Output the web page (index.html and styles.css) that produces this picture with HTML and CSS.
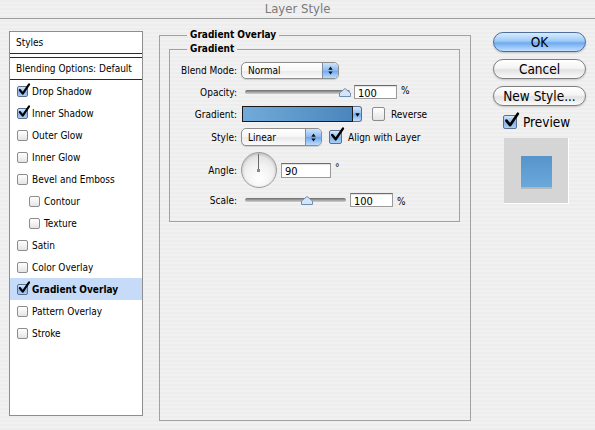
FILE: index.html
```html
<!DOCTYPE html>
<html lang="en">
<head>
    <meta charset="UTF-8">
    <title>Layer Style</title>
    <link rel="stylesheet" href="styles.css">
</head>
<body>
    <div class="window">
        <header class="titlebar">Layer Style</header>
        <div class="content">
            <ul class="styles-list">
                <li class="list-head">Styles</li>
                <li class="list-blend">Blending Options: Default</li>
                <li class="item"><span class="cb on"><svg viewBox="0 0 14 14"><path d="M3 7.5 L6.2 11.5 L13 1.5"/></svg></span>Drop Shadow</li>
                <li class="item"><span class="cb on"><svg viewBox="0 0 14 14"><path d="M3 7.5 L6.2 11.5 L13 1.5"/></svg></span>Inner Shadow</li>
                <li class="item"><span class="cb"></span>Outer Glow</li>
                <li class="item"><span class="cb"></span>Inner Glow</li>
                <li class="item"><span class="cb"></span>Bevel and Emboss</li>
                <li class="item sub"><span class="cb"></span>Contour</li>
                <li class="item sub"><span class="cb"></span>Texture</li>
                <li class="item"><span class="cb"></span>Satin</li>
                <li class="item"><span class="cb"></span>Color Overlay</li>
                <li class="item selected"><span class="cb on"><svg viewBox="0 0 14 14"><path d="M3 7.5 L6.2 11.5 L13 1.5"/></svg></span>Gradient Overlay</li>
                <li class="item"><span class="cb"></span>Pattern Overlay</li>
                <li class="item"><span class="cb"></span>Stroke</li>
            </ul>

            <fieldset class="group outer">
                <legend>Gradient Overlay</legend>
                <fieldset class="group inner">
                    <legend>Gradient</legend>

                    <div class="row">
                        <span class="label">Blend Mode:</span>
                        <div class="select blend"><span>Normal</span><span class="stepper"><svg viewBox="0 0 8 12"><path d="M4 1.5 L6.5 5 H1.5 Z M4 10.5 L6.5 7 H1.5 Z"/></svg></span></div>
                    </div>

                    <div class="row">
                        <span class="label">Opacity:</span>
                        <div class="slider opacity"><span class="track"></span><svg class="thumb" viewBox="0 0 12 9"><path d="M0.5 8.5 V5 L6 0.5 L11.5 5 V8.5 Z"/></svg></div>
                        <span class="field num">100</span>
                        <span class="unit">%</span>
                    </div>

                    <div class="row">
                        <span class="label">Gradient:</span>
                        <span class="gradient-swatch"></span>
                        <span class="gradient-arrow"><svg viewBox="0 0 8 8"><path d="M1.5 2.5 H6.5 L4 6.5 Z"/></svg></span>
                        <span class="cb mid reverse"></span>
                        <span class="check-text">Reverse</span>
                    </div>

                    <div class="row row-style">
                        <span class="label">Style:</span>
                        <div class="select style"><span>Linear</span><span class="stepper"><svg viewBox="0 0 8 12"><path d="M4 1.5 L6.5 5 H1.5 Z M4 10.5 L6.5 7 H1.5 Z"/></svg></span></div>
                        <span class="cb mid on align"><svg viewBox="0 0 14 14"><path d="M3 7.5 L6.2 11.5 L13 1.5"/></svg></span>
                        <span class="check-text">Align with Layer</span>
                    </div>

                    <div class="row row-angle">
                        <span class="label">Angle:</span>
                        <span class="dial"></span>
                        <span class="field angle">90</span>
                        <span class="unit deg">&deg;</span>
                    </div>

                    <div class="row row-scale">
                        <span class="label">Scale:</span>
                        <div class="slider scale"><span class="track"></span><svg class="thumb" viewBox="0 0 12 9"><path d="M0.5 8.5 V5 L6 0.5 L11.5 5 V8.5 Z"/></svg></div>
                        <span class="field num">100</span>
                        <span class="unit">%</span>
                    </div>
                </fieldset>
            </fieldset>

            <div class="actions">
                <button class="btn default">OK</button>
                <button class="btn">Cancel</button>
                <button class="btn">New Style...</button>
                <div class="preview-check">
                    <span class="cb big on"><svg viewBox="0 0 14 14"><path d="M3 7.5 L6.2 11.5 L13 1.5"/></svg></span>
                    <span>Preview</span>
                </div>
                <div class="preview"><div class="preview-swatch"></div></div>
            </div>
        </div>
    </div>
</body>
</html>
```

FILE: styles.css
```css
body {
    margin: 0;
    font-family: "DejaVu Sans Condensed", "Liberation Sans", sans-serif;
    font-size: 10px;
    color: #000;
}
.window {
    width: 595px;
    height: 430px;
    overflow: hidden;
    background: repeating-linear-gradient(to bottom, #ededed 0, #ededed 2px, #f1f1f1 2px, #f1f1f1 4px);
}
.titlebar {
    height: 18px;
    line-height: 18px;
    text-align: center;
    font-size: 13px;
    color: #7a7a7a;
    border-bottom: 1px solid #9c9c9c;
}
.content {
    display: flex;
    align-items: flex-start;
    padding: 12px 0 0 9px;
}

/* left list */
.styles-list {
    list-style: none;
    margin: 0;
    padding: 0;
    width: 132px;
    height: 383px;
    background: #fff;
    border: 1px solid #8e8e8e;
}
.list-head {
    height: 21px;
    line-height: 22px;
    padding-left: 6px;
    border-bottom: 1px solid #2a2a2a;
}
.list-blend {
    height: 21px;
    line-height: 21px;
    padding-left: 6px;
    margin-top: 3px;
    border-top: 1px solid #2a2a2a;
    border-bottom: 1px solid #2a2a2a;
}
.item {
    display: flex;
    align-items: center;
    gap: 4px;
    height: 22px;
    padding-left: 7px;
}
.item.sub {
    padding-left: 19px;
}
.item.selected {
    background: #c6dbf7;
    font-weight: bold;
}

/* checkboxes */
.cb {
    position: relative;
    display: inline-block;
    flex: none;
    width: 9px;
    height: 9px;
    border: 1px solid #8c8c8c;
    border-radius: 2px;
    background: linear-gradient(#ffffff, #e4e4e4);
}
.cb.on {
    border-color: #5a6f8f;
    background: linear-gradient(#d6e8fb, #86b4ea 55%, #a9cff6);
}
.cb svg {
    position: absolute;
    left: -1px;
    top: -4px;
    width: 13px;
    height: 13px;
    overflow: visible;
}
.cb svg path {
    fill: none;
    stroke: #000;
    stroke-width: 2.3;
    stroke-linecap: round;
    stroke-linejoin: round;
}
.cb.mid {
    width: 11px;
    height: 12px;
}
.cb.mid svg {
    width: 15px;
    height: 15px;
    top: -4px;
}
.cb.big {
    width: 12px;
    height: 12px;
}
.cb.big svg {
    width: 16px;
    height: 16px;
    top: -4px;
}

/* group boxes */
.group {
    margin: 0;
    border: 1px solid #a2a2a2;
}
.group legend {
    font-weight: bold;
    line-height: 12px;
    padding: 0 3px;
}
.outer {
    width: 292px;
    height: 388px;
    margin: -2px 0 0 16px;
    padding: 2px 9px 0 9px;
}
.outer > legend {
    margin-left: 18px;
}
.inner {
    width: 291px;
    box-sizing: border-box;
    padding: 4px 0 0 0;
}
.inner > legend {
    margin-left: 17px;
}

/* form rows */
.row {
    display: flex;
    align-items: center;
    height: 22px;
}
.row-style {
    margin-top: 1px;
}
.row-angle {
    height: 44px;
}
.row-scale {
    height: 16px;
    margin-bottom: 13px;
}
.label {
    width: 67px;
    text-align: right;
    margin-right: 4px;
    flex: none;
}
.select {
    display: flex;
    align-items: center;
    box-sizing: border-box;
    height: 17px;
    padding-left: 6px;
    border: 1px solid #8d8d8d;
    border-radius: 5px;
    background: linear-gradient(#ffffff, #f6f6f6 50%, #e9e9e9 51%, #fbfbfb);
    box-shadow: 0 1px 1px rgba(0, 0, 0, 0.15);
}
.select > span:first-child {
    flex: 1;
}
.select.blend {
    width: 98px;
}
.select.style {
    width: 81px;
    height: 18px;
}
.stepper {
    display: flex;
    align-items: center;
    justify-content: center;
    width: 15px;
    height: 100%;
    border-left: 1px solid #7c8ea8;
    border-radius: 0 4px 4px 0;
    background: linear-gradient(#cfe3fb, #8cbaf0 50%, #6ea6ec 51%, #bcdcfc);
}
.stepper svg {
    width: 7px;
    height: 11px;
}
.stepper path {
    fill: #111;
}

.slider {
    position: relative;
    height: 10px;
    margin-left: 4px;
    flex: none;
}
.slider.opacity {
    width: 105px;
}
.slider.scale {
    width: 101px;
}
.track {
    position: absolute;
    left: 0;
    right: 0;
    top: 3px;
    height: 4px;
    border-radius: 2px;
    background: linear-gradient(#6b6b6b, #a9a9a9 60%, #d0d0d0);
}
.thumb {
    position: absolute;
    top: 1px;
    width: 12px;
    height: 9px;
}
.thumb path {
    fill: #d3e5f7;
    stroke: #6e8eb1;
    stroke-width: 1;
}
.opacity .thumb {
    left: 94px;
}
.scale .thumb {
    left: 56px;
}

.field {
    box-sizing: border-box;
    height: 14px;
    line-height: 13px;
    padding: 1px 0 0 3px;
    background: #fff;
    border: 1px solid #9a9a9a;
    border-top-color: #6c6c6c;
    box-shadow: inset 0 1px 1px rgba(0, 0, 0, 0.12);
    font-size: 11px;
}
.field.num {
    width: 43px;
    margin-left: 4px;
}
.field.angle {
    width: 50px;
    height: 15px;
    margin-left: 4px;
}
.unit {
    margin-left: 4px;
    font-size: 10px;
    align-self: flex-start;
    margin-top: 4px;
}
.row-angle .unit {
    margin-top: 14px;
}

.gradient-swatch {
    box-sizing: border-box;
    width: 111px;
    height: 16px;
    margin-left: 1px;
    border: 1px solid #1a1a1a;
    background: linear-gradient(to right, #72abda, #5b97c9 55%, #4a86bd);
}
.gradient-arrow {
    display: flex;
    align-items: center;
    justify-content: center;
    box-sizing: border-box;
    width: 9px;
    height: 16px;
    border: 1px solid #5c6f8d;
    border-left: none;
    border-radius: 0 3px 3px 0;
    background: linear-gradient(#d4e7fc, #8fbdf1 50%, #6fa7ec 51%, #c1defc);
}
.gradient-arrow svg {
    width: 7px;
    height: 7px;
}
.gradient-arrow path {
    fill: #000;
}
.reverse {
    margin-left: 10px;
}
.align {
    margin-left: 7px;
}
.check-text {
    margin-left: 6px;
}

.dial {
    position: relative;
    box-sizing: border-box;
    width: 36px;
    height: 36px;
    border-radius: 50%;
    border: 1px solid #9b9b9b;
    background: radial-gradient(circle at 50% 75%, #ffffff 0, #f2f2f2 45%, #d6d6d6 100%);
    box-shadow: inset 0 1px 3px rgba(0, 0, 0, 0.2);
}
.dial::before {
    content: "";
    position: absolute;
    left: 16px;
    top: 1px;
    width: 1px;
    height: 16px;
    background: #6a6a6a;
}
.dial::after {
    content: "";
    position: absolute;
    left: 15px;
    top: 16px;
    width: 3px;
    height: 3px;
    background: #8a8a8a;
}

/* right column */
.actions {
    display: flex;
    flex-direction: column;
    align-items: flex-start;
    margin: 1px 0 0 22px;
}
.btn {
    width: 93px;
    height: 20px;
    margin-bottom: 7px;
    padding: 0;
    font-family: "DejaVu Sans Condensed", "Liberation Sans", sans-serif;
    font-size: 13.5px;
    color: #000;
    border: 1px solid #7f7f7f;
    border-radius: 10px;
    background: linear-gradient(#ffffff, #f4f4f4 45%, #e2e2e2 55%, #fafafa);
    box-shadow: 0 1px 2px rgba(0, 0, 0, 0.2);
}
.btn.default {
    border-color: #4e6f9e;
    background: linear-gradient(#d9ecff, #9ccaf6 45%, #6eaaf0 55%, #bfe0ff);
}
.preview-check {
    display: flex;
    align-items: center;
    gap: 6px;
    margin: 1px 0 0 10px;
    font-size: 13.5px;
}
.preview {
    box-sizing: border-box;
    width: 65px;
    height: 66px;
    margin: 8px 0 0 11px;
    padding: 18px 0 0 17px;
    background: #d5d5d5;
    border-right: 1px solid #fff;
    border-bottom: 1px solid #fff;
}
.preview-swatch {
    width: 31px;
    height: 31px;
    background: linear-gradient(#5794ca, #6aa8dc);
    box-shadow: 0 2px 0 #b8b8b8;
}
```
